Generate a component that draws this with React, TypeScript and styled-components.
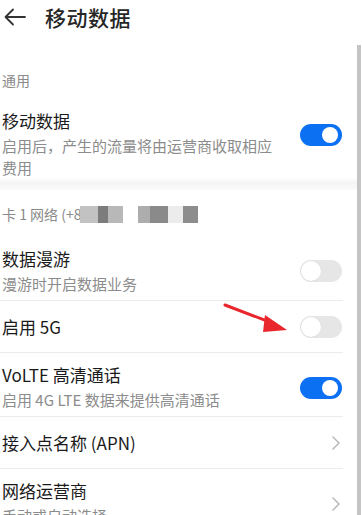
import styled, { createGlobalStyle } from "styled-components";

const GlobalStyle = createGlobalStyle`
  html, body {
    margin: 0;
    padding: 0;
    background: #ffffff;
  }
  body {
    font-family: "Noto Sans CJK SC", "Noto Sans", sans-serif;
    -webkit-font-smoothing: antialiased;
  }
`;

type Setting = {
  title: string;
  desc?: string;
  kind: "toggle" | "link" | "plain";
  on?: boolean;
};

const carrierSettings: Setting[] = [
  { title: "数据漫游", desc: "漫游时开启数据业务", kind: "toggle", on: false },
  { title: "启用 5G", kind: "toggle", on: false },
  { title: "VoLTE 高清通话", desc: "启用 4G LTE 数据来提供高清通话", kind: "toggle", on: true },
  { title: "接入点名称 (APN)", kind: "link" },
  { title: "网络运营商", desc: "手动或自动选择", kind: "link" },
];

// blurred phone number blocks in the section label
const mosaic = [
  { w: 18, c: "#c2c2c2" },
  { w: 10, c: "#7c7c7c" },
  { w: 15, c: "#b8b8b8" },
  { w: 15, c: "transparent" },
  { w: 12, c: "#adadad" },
  { w: 18, c: "#8a8a8a" },
  { w: 15, c: "#ececec" },
  { w: 15, c: "#8d8d8d" },
];

const Toggle = ({ on }: { on?: boolean }) => (
  <Track $on={on}>
    <Knob $on={on} />
  </Track>
);

const Chevron = () => (
  <ChevronBox>
    <svg width="8" height="14" viewBox="0 0 8 14" fill="none">
      <path d="M1 1 L7 7 L1 13" stroke="#b3b3b3" strokeWidth="1.4" strokeLinecap="round" strokeLinejoin="round" />
    </svg>
  </ChevronBox>
);

const SettingRow = ({ item }: { item: Setting }) => (
  <Row $tall={!!item.desc}>
    <Texts>
      <RowTitle>{item.title}</RowTitle>
      {item.desc && <RowDesc>{item.desc}</RowDesc>}
    </Texts>
    {item.kind === "toggle" && <Toggle on={item.on} />}
    {item.kind === "link" && <Chevron />}
  </Row>
);

const App = () => {
  return (
    <Page>
      <GlobalStyle />
      <Main>
        <Header>
          <BackButton>
            <svg width="24" height="20" viewBox="0 0 24 20" fill="none">
              <path d="M22 10 H3 M10 2.5 L2.5 10 L10 17.5" stroke="#333" strokeWidth="1.8" strokeLinecap="round" strokeLinejoin="round" />
            </svg>
          </BackButton>
          <HeaderTitle>移动数据</HeaderTitle>
        </Header>

        <GroupLabel $top={36} $bottom={8}>通用</GroupLabel>
        <MainRow>
          <Texts>
            <RowTitle>移动数据</RowTitle>
            <RowDesc>
              启用后，产生的流量将由运营商收取相应
              <br />
              费用
            </RowDesc>
          </Texts>
          <MainSwitch>
            <Toggle on />
          </MainSwitch>
        </MainRow>
        <Band />

        <GroupLabel $top={14} $bottom={12}>
          卡 1 网络 (+8
          <Mosaic>
            {mosaic.map((m, i) => (
              <Tile key={i} style={{ width: m.w, background: m.c }} />
            ))}
          </Mosaic>
        </GroupLabel>
        <List>
          {carrierSettings.map((it) => (
            <SettingRow key={it.title} item={it} />
          ))}
        </List>
      </Main>
      <Rail />

      <Pointer width="70" height="36" viewBox="0 0 70 36">
        <path d="M2 2 L52 21" stroke="#e8262b" strokeWidth="3" strokeLinecap="round" />
        <path d="M42 12 L64 27 L40 29 Z" fill="#e8262b" />
      </Pointer>
    </Page>
  );
};

const Page = styled.div`
  position: relative;
  display: flex;
  width: 362px;
  height: 515px;
  overflow: hidden;
  background: #fff;
`;

const Main = styled.div`
  flex: 1;
  min-width: 0;
`;

const Rail = styled.div`
  width: 4px;
  margin: 45px 1px 0 0;
  background: #c4c4c4;
`;

const Header = styled.div`
  display: flex;
  align-items: center;
  height: 34px;
  padding-left: 3px;
`;

const BackButton = styled.div`
  display: flex;
  width: 24px;
  height: 20px;
`;

const HeaderTitle = styled.h1`
  margin: 0 0 0 18px;
  font-size: 21px;
  font-weight: 500;
  color: #262626;
  letter-spacing: 0.5px;
`;

const GroupLabel = styled.div<{ $top: number; $bottom: number }>`
  display: flex;
  align-items: center;
  padding: ${(p) => p.$top}px 0 ${(p) => p.$bottom}px 2px;
  height: 20px;
  font-size: 14px;
  color: #8a8a8a;
  line-height: 20px;
`;

const Mosaic = styled.div`
  display: flex;
  height: 17px;
  margin-left: -1px;
`;

const Tile = styled.div`
  height: 100%;
`;

const Texts = styled.div`
  flex: 1;
  display: flex;
  flex-direction: column;
  min-width: 0;
`;

const RowTitle = styled.div`
  font-size: 17px;
  line-height: 22px;
  color: #1a1a1a;
`;

const RowDesc = styled.div`
  margin-top: 3px;
  font-size: 15px;
  line-height: 22px;
  color: #8c8c8c;
`;

const MainRow = styled.div`
  display: flex;
  align-items: flex-start;
  margin-right: 14px;
  padding: 12px 0 0 2px;
  height: 67px;
`;

const MainSwitch = styled.div`
  margin-top: 14px;
`;

const Band = styled.div`
  height: 13px;
  background: linear-gradient(#ffffff, #f4f4f4 45%, #fafafa);
`;

const List = styled.div`
  display: flex;
  flex-direction: column;
`;

const Row = styled.div<{ $tall: boolean }>`
  display: flex;
  align-items: center;
  box-sizing: border-box;
  margin-right: 14px;
  padding: ${(p) => (p.$tall ? "11px 0 5px 2px" : "0 0 0 2px")};
  height: ${(p) => (p.$tall ? 64 : 52)}px;

  & + & {
    border-top: 1px solid #ebebeb;
  }
`;

const Track = styled.div<{ $on?: boolean }>`
  position: relative;
  flex: none;
  box-sizing: border-box;
  width: 42px;
  height: 22px;
  margin-right: 1px;
  border-radius: 11px;
  background: ${(p) => (p.$on ? "#0b70f2" : "#e6e6e6")};
`;

const Knob = styled.div<{ $on?: boolean }>`
  position: absolute;
  top: ${(p) => (p.$on ? 3 : 1)}px;
  left: ${(p) => (p.$on ? 22 : 1)}px;
  box-sizing: border-box;
  width: ${(p) => (p.$on ? 16 : 20)}px;
  height: ${(p) => (p.$on ? 16 : 20)}px;
  border-radius: 50%;
  background: #fff;
  box-shadow: ${(p) => (p.$on ? "none" : "0 0 0 0.5px #dcdcdc")};
`;

const ChevronBox = styled.div`
  display: flex;
  margin-right: 3px;
`;

const Pointer = styled.svg`
  position: absolute;
  left: 223px;
  top: 303px;
`;

export default App;
